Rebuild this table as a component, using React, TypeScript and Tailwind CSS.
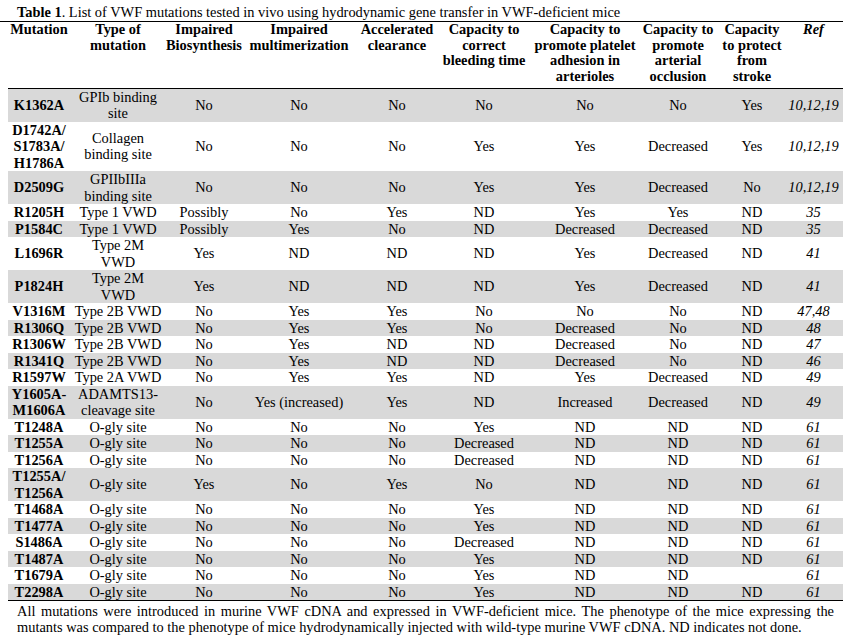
const headers: string[][] = [
    ["Mutation"],
    ["Type of", "mutation"],
    ["Impaired", "Biosynthesis"],
    ["Impaired", "multimerization"],
    ["Accelerated", "clearance"],
    ["Capacity to", "correct", "bleeding time"],
    ["Capacity to", "promote platelet", "adhesion in", "arterioles"],
    ["Capacity to", "promote", "arterial", "occlusion"],
    ["Capacity", "to protect", "from", "stroke"],
];

const widths = [
    "w-[62px]",
    "w-[96px]",
    "w-[76px]",
    "w-[114px]",
    "w-[82px]",
    "w-[92px]",
    "w-[110px]",
    "w-[76px]",
    "w-[72px]",
    "w-[55px]",
];

type Row = {
    mutation: string[];
    type: string[];
    values: string[];
    ref: string;
};

const rows: Row[] = [
    { mutation: ["K1362A"], type: ["GPIb binding", "site"], values: ["No", "No", "No", "No", "No", "No", "Yes"], ref: "10,12,19" },
    { mutation: ["D1742A/", "S1783A/", "H1786A"], type: ["Collagen", "binding site"], values: ["No", "No", "No", "Yes", "Yes", "Decreased", "Yes"], ref: "10,12,19" },
    { mutation: ["D2509G"], type: ["GPIIbIIIa", "binding site"], values: ["No", "No", "No", "Yes", "Yes", "Decreased", "No"], ref: "10,12,19" },
    { mutation: ["R1205H"], type: ["Type 1 VWD"], values: ["Possibly", "No", "Yes", "ND", "Yes", "Yes", "ND"], ref: "35" },
    { mutation: ["P1584C"], type: ["Type 1 VWD"], values: ["Possibly", "Yes", "No", "ND", "Decreased", "Decreased", "ND"], ref: "35" },
    { mutation: ["L1696R"], type: ["Type 2M", "VWD"], values: ["Yes", "ND", "ND", "ND", "Yes", "Decreased", "ND"], ref: "41" },
    { mutation: ["P1824H"], type: ["Type 2M", "VWD"], values: ["Yes", "ND", "ND", "ND", "Yes", "Decreased", "ND"], ref: "41" },
    { mutation: ["V1316M"], type: ["Type 2B VWD"], values: ["No", "Yes", "Yes", "No", "No", "No", "ND"], ref: "47,48" },
    { mutation: ["R1306Q"], type: ["Type 2B VWD"], values: ["No", "Yes", "Yes", "No", "Decreased", "No", "ND"], ref: "48" },
    { mutation: ["R1306W"], type: ["Type 2B VWD"], values: ["No", "Yes", "ND", "ND", "Decreased", "No", "ND"], ref: "47" },
    { mutation: ["R1341Q"], type: ["Type 2B VWD"], values: ["No", "Yes", "ND", "ND", "Decreased", "No", "ND"], ref: "46" },
    { mutation: ["R1597W"], type: ["Type 2A VWD"], values: ["No", "Yes", "Yes", "ND", "Yes", "Decreased", "ND"], ref: "49" },
    { mutation: ["Y1605A-", "M1606A"], type: ["ADAMTS13-", "cleavage site"], values: ["No", "Yes (increased)", "Yes", "ND", "Increased", "Decreased", "ND"], ref: "49" },
    { mutation: ["T1248A"], type: ["O-gly site"], values: ["No", "No", "No", "Yes", "ND", "ND", "ND"], ref: "61" },
    { mutation: ["T1255A"], type: ["O-gly site"], values: ["No", "No", "No", "Decreased", "ND", "ND", "ND"], ref: "61" },
    { mutation: ["T1256A"], type: ["O-gly site"], values: ["No", "No", "No", "Decreased", "ND", "ND", "ND"], ref: "61" },
    { mutation: ["T1255A/", "T1256A"], type: ["O-gly site"], values: ["Yes", "No", "Yes", "No", "ND", "ND", "ND"], ref: "61" },
    { mutation: ["T1468A"], type: ["O-gly site"], values: ["No", "No", "No", "Yes", "ND", "ND", "ND"], ref: "61" },
    { mutation: ["T1477A"], type: ["O-gly site"], values: ["No", "No", "No", "Yes", "ND", "ND", "ND"], ref: "61" },
    { mutation: ["S1486A"], type: ["O-gly site"], values: ["No", "No", "No", "Decreased", "ND", "ND", "ND"], ref: "61" },
    { mutation: ["T1487A"], type: ["O-gly site"], values: ["No", "No", "No", "Yes", "ND", "ND", "ND"], ref: "61" },
    { mutation: ["T1679A"], type: ["O-gly site"], values: ["No", "No", "No", "Yes", "ND", "ND", ""], ref: "61" },
    { mutation: ["T2298A"], type: ["O-gly site"], values: ["No", "No", "No", "Yes", "ND", "ND", "ND"], ref: "61" },
];

const Lines = ({ lines }: { lines: string[] }) => (
    <>
        {lines.map((line, i) => (
            <div key={i} className="whitespace-nowrap">
                {line}
            </div>
        ))}
    </>
);

const App = () => {
    return (
        <div className="w-[851px] h-[638px] bg-white text-black text-[14.4px] font-['Liberation_Serif',serif]">
            <div className="w-[843px] h-[22px] pl-[17px] pt-[4px] leading-[17px] border-b border-black whitespace-nowrap">
                <span className="font-bold">Table 1</span>. List of VWF
                mutations tested in vivo using hydrodynamic gene transfer in
                VWF-deficient mice
            </div>
            <table className="ml-[8px] w-[835px] table-fixed border-collapse">
                <colgroup>
                    {widths.map((w, i) => (
                        <col key={i} className={w} />
                    ))}
                </colgroup>
                <thead>
                    <tr className="h-[66px] border-b border-black">
                        {headers.map((h, i) => (
                            <th
                                key={i}
                                className="p-0 align-top text-center font-bold leading-[15.5px]"
                            >
                                <Lines lines={h} />
                            </th>
                        ))}
                        <th className="p-0 pr-[4px] align-top text-center font-bold italic leading-[15.5px]">
                            Ref
                        </th>
                    </tr>
                </thead>
                <tbody className="border-b border-black">
                    {rows.map((row, i) => (
                        <tr
                            key={i}
                            className={
                                i % 2 === 0 ? "bg-[#d9d9d9]" : "bg-white"
                            }
                        >
                            <td className="p-0 text-center align-middle font-bold leading-[16.5px]">
                                <Lines lines={row.mutation} />
                            </td>
                            <td className="p-0 text-center align-middle leading-[16.5px]">
                                <Lines lines={row.type} />
                            </td>
                            {row.values.map((v, j) => (
                                <td
                                    key={j}
                                    className="p-0 text-center align-middle leading-[16.5px] whitespace-nowrap"
                                >
                                    {v}
                                </td>
                            ))}
                            <td className="p-0 pr-[4px] text-center align-middle italic leading-[16.5px]">
                                {row.ref}
                            </td>
                        </tr>
                    ))}
                </tbody>
            </table>
            <div className="w-[851px] px-[17px] pt-[2px] leading-[16px]">
                <div className="text-justify [text-align-last:justify]">
                    All mutations were introduced in murine VWF cDNA and
                    expressed in VWF-deficient mice. The phenotype of the mice
                    expressing the
                </div>
                <div>
                    mutants was compared to the phenotype of mice
                    hydrodynamically injected with wild-type murine VWF cDNA.
                    ND indicates not done.
                </div>
            </div>
        </div>
    );
};

export default App;
